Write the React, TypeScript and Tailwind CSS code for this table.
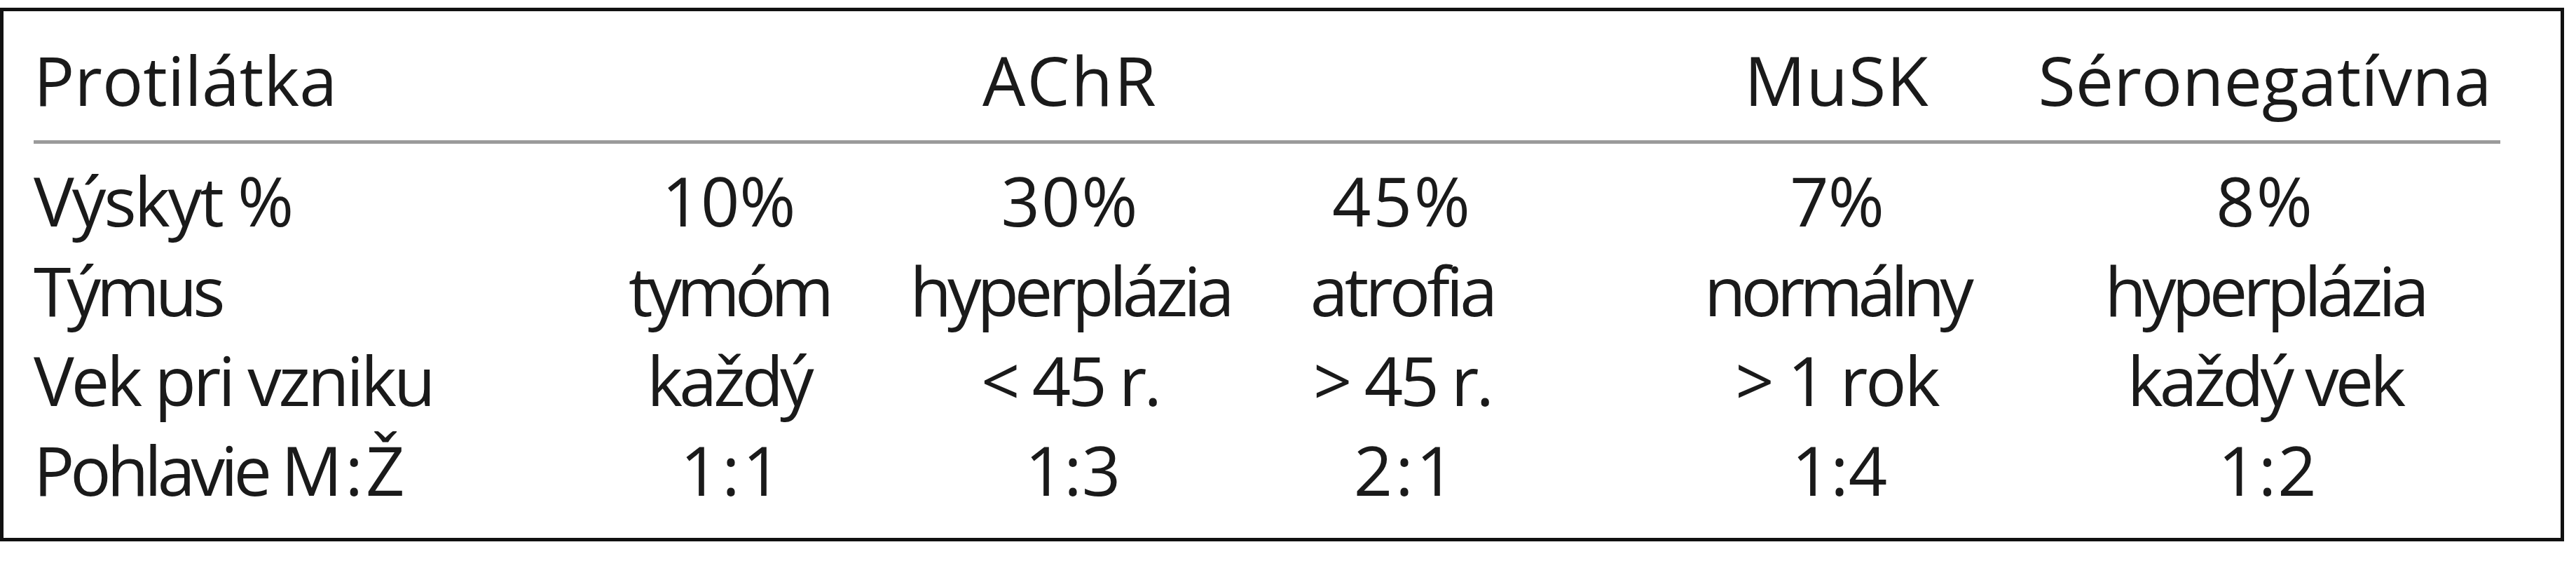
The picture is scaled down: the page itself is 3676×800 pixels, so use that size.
import React from 'react'

// [text, tracking] – tracking tuned per cell so the text widths follow the original
type C = [string, string]

const header: C[] = [
  ['Protilátka', 'tracking-[0px]'],
  ['', ''],
  ['AChR', 'tracking-[2px]'],
  ['', ''],
  ['MuSK', 'tracking-[1px]'],
  ['Séronegatívna', 'tracking-[0px]'],
]

const rows: C[][] = [
  [
    ['Výskyt %', 'tracking-[-3px]'],
    ['10%', 'tracking-[0px]'],
    ['30%', 'tracking-[2px]'],
    ['45%', 'tracking-[3px]'],
    ['7%', 'tracking-[-1px]'],
    ['8%', 'tracking-[2px]'],
  ],
  [
    ['Týmus', 'tracking-[-6px]'],
    ['tymóm', 'tracking-[-7px]'],
    ['hyperplázia', 'tracking-[-6px]'],
    ['atrofia', 'tracking-[-5px]'],
    ['normálny', 'tracking-[-7px]'],
    ['hyperplázia', 'tracking-[-6px]'],
  ],
  [
    ['Vek pri vzniku', 'tracking-[-4px]'],
    ['každý', 'tracking-[-5px]'],
    ['< 45 r.', 'tracking-[-4px]'],
    ['> 45 r.', 'tracking-[-4px]'],
    ['> 1 rok', 'tracking-[-3px]'],
    ['každý vek', 'tracking-[-5px]'],
  ],
  [
    ['Pohlavie M\u2009:\u2009Ž', 'tracking-[-6px]'],
    ['1\u2009:\u20091', 'tracking-[-6px]'],
    ['1\u2009:\u20093', 'tracking-[-8px]'],
    ['2\u2009:\u20091', 'tracking-[-6px]'],
    ['1\u2009:\u20094', 'tracking-[-8px]'],
    ['1\u2009:\u20092', 'tracking-[-7px]'],
  ],
]

const grid = 'grid grid-cols-[748px_488px_486px_462px_778px_444px]'

const Row = ({ cells }: { cells: C[] }) => (
  <div className={grid}>
    <div className={`whitespace-nowrap ${cells[0][1]}`}>{cells[0][0]}</div>
    {cells.slice(1).map(([t, tr], i) => (
      <div key={i} className={`flex justify-center whitespace-nowrap ${tr}`}>
        {t}
      </div>
    ))}
  </div>
)

export default function App() {
  return (
    <div className="bg-white pt-[11px] w-[3676px] h-[800px]">
      <div className="w-[3659px] border-[5px] border-[#111] pt-[33px] pb-[34px] pl-[43px] pr-[86px] font-['Open_Sans',sans-serif] font-normal text-[97px] leading-[128px] text-[#1a1a1a]">
        <Row cells={header} />
        <div className="mt-[23px] mb-[16px] h-[5px] bg-[#9a9a9a]" />
        {rows.map((r) => (
          <Row key={r[0][0]} cells={r} />
        ))}
      </div>
    </div>
  )
}
